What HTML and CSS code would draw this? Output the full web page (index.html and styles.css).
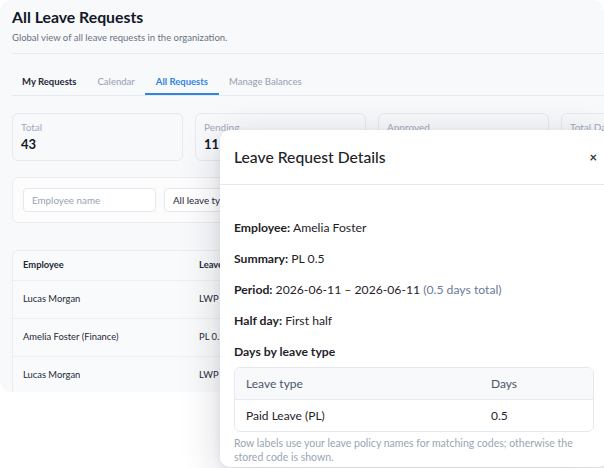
FILE: index.html
```html
<!DOCTYPE html>
<html>
<head>
<meta charset="utf-8">
<link rel="stylesheet" href="styles.css">
</head>
<body>
<div class="page">
  <div class="panel">
    <header class="head">
      <h1 class="title">All Leave Requests</h1>
      <p class="subtitle">Global view of all leave requests in the organization.</p>
    </header>
    <nav class="tabs">
      <span class="tab tab-dark">My Requests</span>
      <span class="tab">Calendar</span>
      <span class="tab tab-active">All Requests</span>
      <span class="tab">Manage Balances</span>
    </nav>
    <div class="stats">
      <div class="stat"><div class="stat-label">Total</div><div class="stat-value">43</div></div>
      <div class="stat"><div class="stat-label">Pending</div><div class="stat-value">11</div></div>
      <div class="stat"><div class="stat-label">Approved</div><div class="stat-value">27</div></div>
      <div class="stat"><div class="stat-label">Total Days</div><div class="stat-value">58</div></div>
    </div>
    <div class="filters">
      <div class="input">Employee name</div>
      <div class="select">All leave types</div>
    </div>
    <div class="table-card">
      <div class="trow thead"><span class="c1">Employee</span><span class="c2">Leave</span></div>
      <div class="trow"><span class="c1">Lucas Morgan</span><span class="c2">LWP 1</span></div>
      <div class="trow"><span class="c1">Amelia Foster (Finance)</span><span class="c2">PL 0.5</span></div>
      <div class="trow"><span class="c1">Lucas Morgan</span><span class="c2">LWP 1</span></div>
    </div>
  </div>

  <div class="modal">
    <div class="modal-head">
      <h2 class="modal-title">Leave Request Details</h2>
      <span class="close">×</span>
    </div>
    <div class="modal-body">
      <p class="line"><b>Employee:</b> Amelia Foster</p>
      <p class="line"><b>Summary:</b> PL 0.5</p>
      <p class="line"><b>Period:</b> 2026-06-11 – 2026-06-11 <span class="muted">(0.5 days total)</span></p>
      <p class="line"><b>Half day:</b> First half</p>
      <p class="line section">Days by leave type</p>
      <div class="inner">
        <div class="irow ihead"><span class="ic1">Leave type</span><span>Days</span></div>
        <div class="irow"><span class="ic1">Paid Leave (PL)</span><span>0.5</span></div>
      </div>
      <p class="note">Row labels use your leave policy names for matching codes; otherwise the stored code is shown.</p>
    </div>
  </div>
</div>
</body>
</html>
```

FILE: styles.css
```css
* { box-sizing: border-box; }
html, body { margin: 0; padding: 0; background: #ffffff; }
body {
  font-family: Lato, "Noto Sans", sans-serif;
  width: 604px;
  height: 468px;
  overflow: hidden;
}
.page { position: relative; width: 604px; height: 468px; }
.panel {
  width: 604px;
  height: 392px;
  background: #f8f9fb;
  border-radius: 12px;
  overflow: hidden;
  padding: 0 0 0 12px;
}
.head {
  border-bottom: 1px solid #e8eaf0;
  padding-top: 6px;
  height: 54px;
}
.title {
  margin: 0;
  font-size: 15.8px;
  font-weight: 700;
  color: #111827;
  line-height: 22px;
}
.subtitle {
  margin: 3px 0 0;
  font-size: 9.5px;
  color: #6b7280;
  line-height: 14px;
}
.tabs {
  display: flex;
  margin-top: 16px;
  border-bottom: 1px solid #e6e9f0;
  height: 26px;
}
.tab {
  padding: 0 10.5px;
  font-size: 9.5px;
  line-height: 24px;
  color: #9aa5b5;
  font-weight: 500;
  white-space: nowrap;
}
.tab:first-child { padding-left: 10px; }
.tab-dark { color: #1f2937; font-weight: 700; }
.tab-active { color: #2f86e0; font-weight: 700; border-bottom: 2px solid #2f86e0; }
.stats {
  display: flex;
  gap: 12px;
  margin-top: 17px;
}
.stat {
  flex: 0 0 171px;
  height: 48px;
  border: 1px solid #e6e9ef;
  border-radius: 6px;
  background: #f8f9fb;
  padding: 7px 0 0 8px;
}
.stat-label { font-size: 10px; color: #a0aabb; line-height: 13px; }
.stat-value { font-size: 13px; font-weight: 700; color: #111827; line-height: 19px; margin-top: 1px; }
.filters {
  display: flex;
  gap: 8px;
  margin-top: 16px;
  width: 640px;
  height: 46px;
  border: 1px solid #e9ecf1;
  border-radius: 6px;
  background: #fcfcfd;
  padding: 10px 10px;
}
.input, .select {
  height: 24px;
  border: 1px solid #e5e8ee;
  border-radius: 4px;
  background: #fff;
  font-size: 9.8px;
  line-height: 22px;
  padding: 0 8px;
  white-space: nowrap;
}
.input { width: 133px; color: #9aa3b2; }
.select { width: 140px; color: #1f2937; }
.table-card {
  margin-top: 27px;
  width: 640px;
  border: 1px solid #e9ecf1;
  border-radius: 6px;
  background: #f9fafb;
}
.trow {
  display: flex;
  height: 38px;
  align-items: center;
  border-top: 1px solid #eceff3;
  font-size: 9.4px;
  color: #1f2937;
  padding-bottom: 2px;
}
.trow:first-child { border-top: none; }
.thead { height: 29px; font-weight: 700; }
.c1 { width: 186px; padding-left: 10px; }
.c2 { white-space: nowrap; }

.modal {
  position: absolute;
  left: 220px;
  top: 130px;
  width: 388px;
  height: 337px;
  background: #ffffff;
  border-radius: 10px;
  box-shadow: 0 10px 40px rgba(15, 23, 42, 0.18), 0 2px 8px rgba(15, 23, 42, 0.06);
  overflow: hidden;
}
.modal-head {
  display: flex;
  align-items: center;
  justify-content: space-between;
  height: 55px;
  border-bottom: 1px solid #e5e8ee;
  padding: 0 11px 0 14px;
}
.modal-title {
  margin: 0;
  font-size: 15.7px;
  font-weight: 500;
  color: #1f2328;
}
.close { font-size: 13px; color: #333; font-weight: 700; margin-right: 0; }
.modal-body { padding: 33px 14px 0; }
.line {
  margin: 0 0 11px;
  font-size: 12.2px;
  line-height: 20px;
  color: #1f2328;
}
.line b { font-weight: 700; }
.muted { color: #6b7a99; }
.section { font-weight: 700; margin-bottom: 5px; }
.inner {
  border: 1px solid #e5e8ee;
  border-radius: 6px;
  overflow: hidden;
}
.irow {
  display: flex;
  align-items: center;
  height: 31px;
  padding-left: 11px;
  font-size: 12px;
  color: #1f2328;
}
.ihead { background: #f8f9fb; color: #4b5768; border-bottom: 1px solid #e8ebf0; height: 32px; }
.ic1 { width: 245px; }
.note {
  margin: 4px 0 0;
  font-size: 10.5px;
  line-height: 14px;
  color: #9aa5b5;
}
```
